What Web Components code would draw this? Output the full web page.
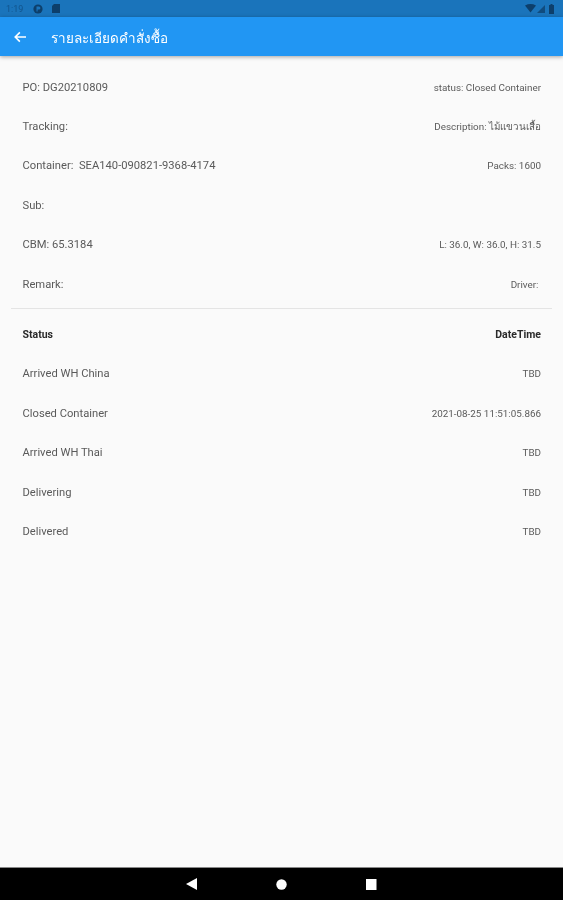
<!DOCTYPE html>
<html><head><meta charset="utf-8">
<style>
html,body{margin:0;padding:0;height:100%}
body{width:563px;height:900px;overflow:hidden;background:#fafafa;font-family:Roboto,"Noto Sans","Noto Sans CJK SC",sans-serif;display:flex;flex-direction:column}
</style></head><body>
<app-screen>
  <status-bar slot="status"></status-bar>
  <app-bar slot="bar">รายละเอียดคำสั่งซื้อ</app-bar>
  <info-row><span slot="a">PO: DG20210809</span><span slot="b">status: Closed Container</span></info-row>
  <info-row><span slot="a">Tracking:</span><span slot="b">Description: ไม้แขวนเสื้อ</span></info-row>
  <info-row><span slot="a">Container:&nbsp; SEA140-090821-9368-4174</span><span slot="b">Packs: 1600</span></info-row>
  <info-row><span slot="a">Sub:</span></info-row>
  <info-row><span slot="a">CBM: 65.3184</span><span slot="b">L: 36.0, W: 36.0, H: 31.5</span></info-row>
  <info-row indent><span slot="a">Remark:</span><span slot="b">Driver:</span></info-row>
  <h-divider></h-divider>
  <info-row head><span slot="a">Status</span><span slot="b">DateTime</span></info-row>
  <info-row><span slot="a">Arrived WH China</span><span slot="b">TBD</span></info-row>
  <info-row><span slot="a">Closed Container</span><span slot="b">2021-08-25 11:51:05.866</span></info-row>
  <info-row><span slot="a">Arrived WH Thai</span><span slot="b">TBD</span></info-row>
  <info-row><span slot="a">Delivering</span><span slot="b">TBD</span></info-row>
  <info-row><span slot="a">Delivered</span><span slot="b">TBD</span></info-row>
  <nav-bar slot="nav"></nav-bar>
</app-screen>
<script>
function def(name, html){
  customElements.define(name, class extends HTMLElement{
    constructor(){super();this.attachShadow({mode:'open'}).innerHTML=html;}
  });
}
def('app-screen',`<style>
:host{display:flex;flex-direction:column;height:900px;background:#fafafa}
main{flex:1;display:flex;flex-direction:column;padding-top:11.5px;min-height:0}
</style><slot name="status"></slot><slot name="bar"></slot><main><slot></slot></main><slot name="nav"></slot>`);
def('status-bar',`<style>
:host{display:flex;align-items:center;height:17px;background:#1a74bb;padding:0 9px 0 6px;box-sizing:border-box;color:#0f4c81;font-size:9px;flex:none}
.t{opacity:.8;filter:blur(.4px);margin-right:10px}
svg{display:block;filter:blur(.3px)}
.sp{flex:1}
</style><span class="t">1:19</span>
<svg width="10" height="10" viewBox="0 0 10 10" style="margin-right:9px"><circle cx="5" cy="5" r="4.6" fill="#0d3f6b"/><path d="M3.5 2.6h2.4a1.5 1.5 0 0 1 0 3H4.6v2H3.5z" fill="#1a74bb"/></svg>
<svg width="8" height="9" viewBox="0 0 8 9"><path d="M2 0h6v9H0V2z" fill="#0d3f6b"/></svg>
<span class="sp"></span>
<svg width="11" height="9" viewBox="0 0 11 9" style="margin-right:1px"><path d="M0 1.4Q5.500-1.200 11 1.400L5.500 8.500z" fill="#0d3f6b"/></svg>
<svg width="8" height="8" viewBox="0 0 8 8" style="margin-right:4px"><path d="M8 0v8H0z" fill="#0d3f6b" opacity=".75"/></svg>
<svg width="5" height="10" viewBox="0 0 5 10"><path d="M1.500 0h2v1H5v9H0V1h1.500z" fill="#0d3f6b"/></svg>`);
def('app-bar',`<style>
:host{display:flex;align-items:center;height:39px;background:#2196f3;color:#fff;font-size:13.500px;font-weight:500;flex:none;box-shadow:0 1px 4px rgba(0,0,0,.35);position:relative;padding-left:14px;font-family:"Noto Sans","Liberation Sans",sans-serif}
svg{display:block;margin-right:25px}
span{filter:blur(.35px);position:relative;top:1px}
</style><svg width="12" height="12" viewBox="0 0 12 12"><path d="M12 5.200H3.100l3.300-3.300L5.300.800.100 6l5.200 5.200 1.100-1.100-3.300-3.300H12z" fill="#fff"/></svg><span><slot></slot></span>`);
def('info-row',`<style>
:host{display:flex;justify-content:space-between;align-items:center;height:39.400px;padding:0 22px 0 22.500px;font-size:11.200px;color:#5a5a5a;flex:none;font-family:Roboto,"Noto Sans",sans-serif}
:host([head]){color:#2a2a2a;font-weight:700;font-size:10.500px}
:host([indent]){padding-right:24.500px}
div{filter:blur(.4px);white-space:nowrap}
.b{font-size:9.850px}
:host([head]) .b{font-size:10.500px}
</style><div><slot name="a"></slot></div><div class="b"><slot name="b"></slot></div>`);
def('h-divider',`<style>:host{display:block;height:1px;background:#e4e4e4;margin:4px 11px 6px;flex:none}</style>`);
def('nav-bar',`<style>
:host{display:flex;height:33px;background:#000;flex:none;position:relative;justify-content:center;align-items:center;gap:79px;padding-left:0;box-sizing:border-box;border-top:1px solid #888}
svg{display:block}
</style>
<svg width="11" height="12" viewBox="0 0 11 12"><path d="M11 0v12L0 6z" fill="#fff"/></svg>
<svg width="11" height="11" viewBox="0 0 11 11"><circle cx="5.500" cy="5.500" r="5.200" fill="#fff"/></svg>
<svg width="11" height="11" viewBox="0 0 11 11"><rect width="10.500" height="11" fill="#fff"/></svg>`);
</script>
</body></html>
